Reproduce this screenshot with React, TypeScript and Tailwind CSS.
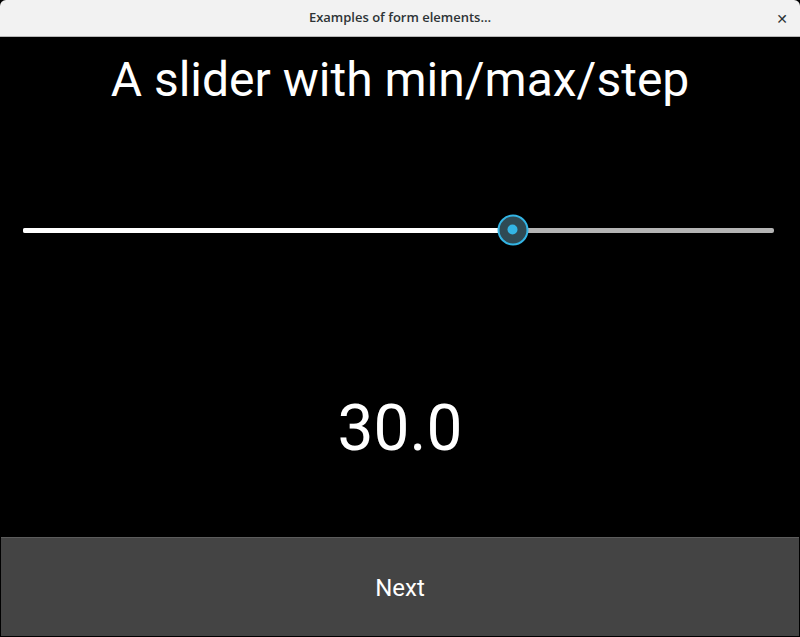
import React from "react";

export default function App() {
  const pct = 0.652;
  return (
    <div className="w-[800px] h-[637px] bg-black flex flex-col overflow-hidden" style={{ fontFamily: "Roboto, 'Noto Sans', sans-serif" }}>
      <div className="h-[37px] shrink-0 bg-[#f2f2f2] rounded-t-[6px] border-b border-[#b8b8b8] flex items-center justify-center relative">
        <span className="text-[13px] font-semibold text-[#2e3436]" style={{ fontFamily: "'Open Sans', sans-serif" }}>Examples of form elements…</span>
        <span className="absolute right-[12px] top-[9px] text-[14px] font-bold text-[#2e3436]" style={{ fontFamily: "'DejaVu Sans', sans-serif" }}>✕</span>
      </div>
      <div className="flex-1 flex flex-col">
        <div className="h-[84px] flex items-center justify-center pt-[2px]">
          <span className="text-white text-[48px] leading-none">A slider with min/max/step</span>
        </div>
        <div className="h-[218px] pl-[23px] pr-[26px] flex items-center">
          <div className="relative w-full h-[5px] bg-[#b4b4b4] rounded-[2px]">
            <div className="absolute left-0 top-0 h-[5px] bg-white rounded-[2px]" style={{ width: `${pct * 100}%` }} />
            <div className="absolute w-[31px] h-[31px] rounded-full border-2 border-[#33b5e5] bg-[#2f4a54] flex items-center justify-center -translate-x-1/2 -translate-y-1/2 top-[2px]" style={{ left: `${pct * 100}%` }}>
              <div className="w-[10px] h-[10px] rounded-full bg-[#33b5e5]" />
            </div>
          </div>
        </div>
        <div className="flex-1 flex items-center justify-center pb-[18px]">
          <span className="text-white text-[64px] leading-none">30.0</span>
        </div>
        <div className="h-[99px] mx-[1px] mb-[1px] bg-[#444444] border-t border-[#5c5c5c] flex items-center justify-center pt-[2px]">
          <span className="text-white text-[24px]">Next</span>
        </div>
      </div>
    </div>
  );
}
